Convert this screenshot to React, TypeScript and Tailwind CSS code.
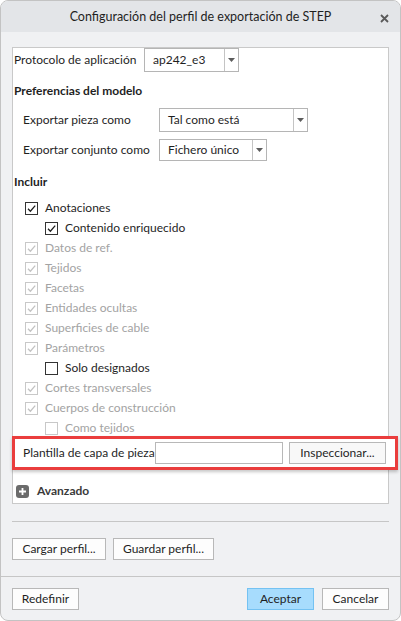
import React from "react";

const font = { fontFamily: 'Lato, "Noto Sans", sans-serif' };

function Arrow() {
  return (
    <svg width="7" height="4" viewBox="0 0 7 4">
      <path d="M0 0 H7 L3.5 4 Z" fill="#5c5c5c" />
    </svg>
  );
}

function Select({ text, w, h }: { text: string; w: string; h: string }) {
  return (
    <div className={`flex ${w} ${h} border border-[#b5b5b5] bg-white`}>
      <div className="flex flex-1 items-center pl-[8px] text-[#1f1f1f]">{text}</div>
      <div className="flex w-[14px] items-center justify-center border-l border-[#c4c4c4]">
        <Arrow />
      </div>
    </div>
  );
}

function Check({
  label,
  checked,
  disabled,
  indent,
}: {
  label: string;
  checked: boolean;
  disabled?: boolean;
  indent?: boolean;
}) {
  const box = disabled ? "border-[#c8c8c8]" : "border-[#333333]";
  const stroke = disabled ? "#c2c2c2" : "#1f1f1f";
  return (
    <div className={`flex h-[20px] items-center ${indent ? "pl-[32px]" : "pl-[12px]"}`}>
      <div className={`flex h-[13px] w-[13px] items-center justify-center border ${box} bg-white`}>
        {checked && (
          <svg width="11" height="11" viewBox="0 0 11 11">
            <path d="M2 5.8 L4.4 8.2 L9.2 2.6" fill="none" stroke={stroke} strokeWidth="1.3" />
          </svg>
        )}
      </div>
      <span className={`ml-[7px] ${disabled ? "text-[#a3a3a3]" : "text-[#1f1f1f]"}`}>{label}</span>
    </div>
  );
}

function Btn({ text, w, primary }: { text: string; w: string; primary?: boolean }) {
  return (
    <div
      className={`flex h-[22px] ${w} items-center justify-center border ${
        primary ? "border-[#74c2f2] bg-[#a7dcfd]" : "border-[#b8b8b8] bg-[#fdfdfd]"
      } text-[#1f1f1f]`}
    >
      {text}
    </div>
  );
}

export default function App() {
  return (
    <div style={font} className="whitespace-nowrap text-[12px] leading-none">
      <div className="flex h-[621px] w-[401px] flex-col overflow-hidden rounded-[8px] border border-[#c3c3c3] bg-[#f0f1f3]">
        {/* Title bar */}
        <div className="relative flex h-[31px] shrink-0 items-center justify-center bg-[#e3e5e8] pt-[2px] text-[12.5px] text-[#1f1f1f]">
          <span>Configuración del perfil de exportación de STEP</span>
          <svg className="absolute right-[11px] top-[13px]" width="9" height="9" viewBox="0 0 9 9">
            <path d="M1 1 L8 8 M8 1 L1 8" stroke="#5a5a5a" strokeWidth="1.8" />
          </svg>
        </div>

        <div className="flex flex-col px-[11px] pt-[15px]">
          {/* Panel */}
          <div className="flex h-[457px] flex-col border border-[#c9c9c9] bg-white">
            <div className="flex h-[24px] items-center">
              <span className="w-[131px] pl-[1px] text-[#1f1f1f]">Protocolo de aplicación</span>
              <Select text="ap242_e3" w="w-[95px]" h="h-[24px]" />
            </div>

            <div className="mt-[9px] flex h-[20px] items-center pl-[1px] font-bold text-[#1f1f1f]">
              Preferencias del modelo
            </div>

            <div className="mt-[7px] flex h-[24px] items-center">
              <span className="w-[146px] pl-[10px] text-[#1f1f1f]">Exportar pieza como</span>
              <Select text="Tal como está" w="w-[149px]" h="h-[24px]" />
            </div>

            <div className="mt-[7px] flex h-[22px] items-center">
              <span className="w-[146px] pl-[10px] text-[#1f1f1f]">Exportar conjunto como</span>
              <Select text="Fichero único" w="w-[108px]" h="h-[22px]" />
            </div>

            <div className="mt-[11px] flex h-[20px] items-center pl-[1px] font-bold text-[#1f1f1f]">
              Incluir
            </div>

            <div className="mt-[6px] flex flex-col">
              <Check label="Anotaciones" checked />
              <Check label="Contenido enriquecido" checked indent />
              <Check label="Datos de ref." checked disabled />
              <Check label="Tejidos" checked disabled />
              <Check label="Facetas" checked disabled />
              <Check label="Entidades ocultas" checked disabled />
              <Check label="Superficies de cable" checked disabled />
              <Check label="Parámetros" checked disabled />
              <Check label="Solo designados" checked={false} indent />
              <Check label="Cortes transversales" checked disabled />
              <Check label="Cuerpos de construcción" checked disabled />
              <Check label="Como tejidos" checked={false} disabled indent />
            </div>

            {/* Highlighted row */}
            <div className="-ml-[1px] -mt-[2px] flex h-[34px] w-[386px] items-center border-[3px] border-[#ea3d3d] bg-white shadow-[0_2px_3px_rgba(0,0,0,0.22)]">
              <span className="w-[140px] pl-[8px] text-[#1f1f1f]">Plantilla de capa de pieza</span>
              <div className="h-[22px] w-[128px] border border-[#b8b8b8] bg-white" />
              <div className="ml-[6px] flex h-[22px] w-[97px] items-center justify-center border border-[#b8b8b8] bg-[#f8f8f8] text-[#1f1f1f]">
                Inspeccionar...
              </div>
            </div>

            <div className="mt-[11px] flex h-[20px] items-center pl-[3px]">
              <svg width="13" height="13" viewBox="0 0 13 13">
                <rect x="0" y="0" width="13" height="13" rx="3" fill="#6b6b6b" />
                <path d="M6.5 3 V10 M3 6.5 H10" stroke="#ffffff" strokeWidth="1.8" />
              </svg>
              <span className="ml-[8px] font-bold text-[#3a3a3a]">Avanzado</span>
            </div>
          </div>

          <div className="mt-[17px] h-px bg-[#c6c6c6]" />

          <div className="mt-[16px] flex gap-[7px]">
            <Btn text="Cargar perfil..." w="w-[94px]" />
            <Btn text="Guardar perfil..." w="w-[101px]" />
          </div>
        </div>

        <div className="mt-[16px] h-px bg-[#c6c6c6]" />

        <div className="mt-[11px] flex px-[11px]">
          <Btn text="Redefinir" w="w-[67px]" />
          <div className="flex-1" />
          <Btn text="Aceptar" w="w-[67px]" primary />
          <div className="w-[8px]" />
          <Btn text="Cancelar" w="w-[67px]" />
        </div>
      </div>
    </div>
  );
}
